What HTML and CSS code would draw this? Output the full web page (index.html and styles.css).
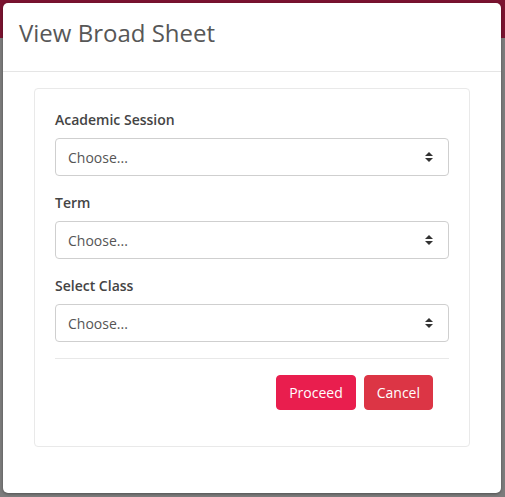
FILE: index.html
```html
<!DOCTYPE html>
<html>
<head>
<meta charset="utf-8">
<link rel="stylesheet" href="styles.css">
</head>
<body>
<div class="page">
  <div class="navbar"></div>
  <div class="backdrop"></div>
</div>
<div class="modal">
  <div class="modal-header">
    <h4 class="modal-title">View Broad Sheet</h4>
  </div>
  <div class="modal-body">
    <div class="card">
      <div class="form-group">
        <label class="label">Academic Session</label>
        <div class="select"><span>Choose...</span>
          <svg class="caret" width="8" height="10" viewBox="0 0 8 10"><path d="M4 0 L8 4 L0 4 Z M0 6 L8 6 L4 10 Z" fill="#333"/></svg>
        </div>
      </div>
      <div class="form-group">
        <label class="label">Term</label>
        <div class="select"><span>Choose...</span>
          <svg class="caret" width="8" height="10" viewBox="0 0 8 10"><path d="M4 0 L8 4 L0 4 Z M0 6 L8 6 L4 10 Z" fill="#333"/></svg>
        </div>
      </div>
      <div class="form-group">
        <label class="label">Select Class</label>
        <div class="select"><span>Choose...</span>
          <svg class="caret" width="8" height="10" viewBox="0 0 8 10"><path d="M4 0 L8 4 L0 4 Z M0 6 L8 6 L4 10 Z" fill="#333"/></svg>
        </div>
      </div>
      <hr class="divider">
      <div class="form-group actions">
        <button class="btn btn-proceed">Proceed</button>
        <button class="btn btn-cancel">Cancel</button>
      </div>
    </div>
  </div>
</div>
</body>
</html>
```

FILE: styles.css
```css
* { box-sizing: border-box; }
html, body {
  margin: 0;
  padding: 0;
  width: 505px;
  height: 497px;
  overflow: hidden;
  font-family: "Open Sans", "Noto Sans", sans-serif;
  background: #7c7c7c;
}
.page {
  display: flex;
  flex-direction: column;
  height: 497px;
}
.navbar {
  height: 38px;
  background: #7a1330;
}
.backdrop {
  flex: 1;
  background: #7c7c7c;
}
.modal {
  position: absolute;
  left: 3px;
  top: 3px;
  width: 498px;
  height: 490px;
  background: #fff;
  border-radius: 5px;
  box-shadow: 0 1px 3px rgba(0,0,0,0.35);
}
.modal-header {
  height: 69px;
  border-bottom: 1px solid #e5e5e5;
  padding: 12px 16px 0 16px;
}
.modal-title {
  margin: 0;
  font-size: 24px;
  font-weight: 400;
  line-height: 36px;
  color: #575757;
}
.modal-body {
  padding: 16px 31px;
}
.card {
  border: 1px solid #e9e9e9;
  border-radius: 4px;
  padding: 20px;
}
.form-group {
  margin-bottom: 16px;
}
.label {
  display: block;
  font-size: 14px;
  font-weight: 600;
  line-height: 21px;
  color: #444;
  margin-bottom: 8px;
}
.select {
  height: 38px;
  border: 1px solid #cfcfcf;
  border-radius: 4px;
  padding: 0 12px;
  display: flex;
  align-items: center;
  justify-content: space-between;
  font-size: 14px;
  color: #555;
}
.caret {
  display: block;
  margin-right: 3px;
}
.divider {
  border: 0;
  border-top: 1px solid #e8e8e8;
  margin: 0 0 16px 0;
}
.actions {
  display: flex;
  justify-content: flex-end;
  gap: 8px;
  padding-right: 16px;
}
.btn {
  font-family: "Open Sans", "Noto Sans", sans-serif;
  font-size: 14px;
  line-height: 21px;
  padding: 6px 12px;
  border: 1px solid transparent;
  border-radius: 4px;
  color: #fff;
  cursor: pointer;
}
.btn-proceed {
  background: #e91e4e;
  border-color: #e91e4e;
}
.btn-cancel {
  background: #dc3545;
  border-color: #dc3545;
}
```
